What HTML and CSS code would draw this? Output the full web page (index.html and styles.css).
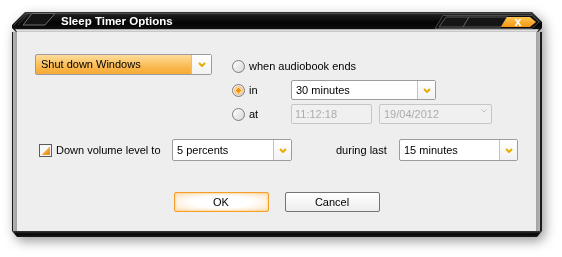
FILE: index.html
```html
<!DOCTYPE html>
<html>
<head>
<meta charset="utf-8">
<title>Sleep Timer Options</title>
<link rel="stylesheet" href="styles.css">
</head>
<body>
<div class="window">
  <div class="titlebar">
    <svg class="title-bg" width="530" height="20" viewBox="0 0 530 20">
      <defs>
        <linearGradient id="tbg" x1="0" y1="0" x2="0" y2="1">
          <stop offset="0" stop-color="#3a3a3a"/>
          <stop offset="0.18" stop-color="#1a1a1a"/>
          <stop offset="0.55" stop-color="#040404"/>
          <stop offset="1" stop-color="#161616"/>
        </linearGradient>
        <linearGradient id="cbg" x1="0" y1="0" x2="0" y2="1">
          <stop offset="0" stop-color="#ffc652"/>
          <stop offset="1" stop-color="#f39612"/>
        </linearGradient>
        <linearGradient id="strip" x1="0" y1="0" x2="0" y2="1">
          <stop offset="0" stop-color="#8a8a8a"/>
          <stop offset="0.4" stop-color="#e4e4e4"/>
          <stop offset="1" stop-color="#bdbdbd"/>
        </linearGradient>
      </defs>
      <polygon points="13,0 520,0 530,10 530,16 526,20 4,20 0,16 0,13" fill="url(#tbg)"/>
      <polyline points="1.5,13.5 14,1.5 519,1.5 528.5,11" fill="none" stroke="#4c4c4c" stroke-width="1"/>
      <polygon points="3,17 527,17 525,20 5,20" fill="url(#strip)"/>
      <polygon points="20,1.5 43,1.5 33,13 11,13" fill="#141414" stroke="#6e6e6e" stroke-width="1"/>
      <line x1="16" y1="1.5" x2="6" y2="13" stroke="#3c3c3c" stroke-width="1"/>
      <polygon points="431,3.5 520,3.5 527,10 520,16.5 423,16.5" fill="#0c0c0c" stroke="#4a4a4a" stroke-width="1"/>
      <polygon points="434,5 457,5 451,15 427,15" fill="#151515" stroke="#5a5a5a" stroke-width="1"/>
      <polygon points="457,5 495,5 489,15 451,15" fill="#151515" stroke="#5a5a5a" stroke-width="1"/>
      <polygon points="495,5 518,5 524,10 518,15 489,15" fill="url(#cbg)"/>
      <text x="506" y="14" text-anchor="middle" class="close-x">x</text>
    </svg>
    <div class="title-text">Sleep Timer Options</div>
  </div>

  <div class="frame">
    <div class="content">
      <div class="top-row">
        <div class="combo combo-accent combo-main">
          <span class="combo-text">Shut down Windows</span>
          <span class="combo-btn combo-btn-wide">
            <svg width="8" height="5" viewBox="0 0 8 5"><polyline points="1,1 4,4 7,1" fill="none" stroke="#e2ad00" stroke-width="2"/></svg>
          </span>
        </div>

        <div class="options">
          <div class="radio span2">
            <svg width="13" height="13" viewBox="0 0 13 13"><defs><linearGradient id="rg1" x1="0" y1="0" x2="1" y2="1"><stop offset="0" stop-color="#ffffff"/><stop offset="1" stop-color="#d6d6d6"/></linearGradient></defs><circle cx="6.5" cy="6.5" r="6" fill="url(#rg1)" stroke="#7c7c7c"/></svg>
            <span>when audiobook ends</span>
          </div>

          <div class="radio">
            <svg width="13" height="13" viewBox="0 0 13 13"><circle cx="6.5" cy="6.5" r="6" fill="url(#rg1)" stroke="#7c7c7c"/><circle cx="6.5" cy="6.5" r="4" fill="#fde3bd" stroke="#f4b15a" stroke-width="0.8"/><polygon points="6.5,3.6 9.4,6.5 6.5,9.4 3.6,6.5" fill="#f0940f"/></svg>
            <span>in</span>
          </div>
          <div class="combo combo-in">
            <span class="combo-text">30 minutes</span>
            <span class="combo-btn">
              <svg width="8" height="5" viewBox="0 0 8 5"><polyline points="1,1 4,4 7,1" fill="none" stroke="#e8ac00" stroke-width="2"/></svg>
            </span>
          </div>

          <div class="radio">
            <svg width="13" height="13" viewBox="0 0 13 13"><circle cx="6.5" cy="6.5" r="6" fill="url(#rg1)" stroke="#7c7c7c"/></svg>
            <span>at</span>
          </div>
          <div class="datetime">
            <div class="field field-time">11:12:18</div>
            <div class="field field-date">
              <span class="field-text">19/04/2012</span>
              <span class="field-btn">
                <svg width="6" height="4" viewBox="0 0 6 4"><polyline points="0.5,0.5 3,3 5.5,0.5" fill="none" stroke="#c4c4c4" stroke-width="1"/></svg>
              </span>
            </div>
          </div>
        </div>
      </div>

      <div class="volume-row">
        <svg class="checkbox" width="13" height="13" viewBox="0 0 13 13"><defs><linearGradient id="cb" x1="0" y1="0" x2="1" y2="1"><stop offset="0" stop-color="#fbc46c"/><stop offset="1" stop-color="#e98a0c"/></linearGradient></defs><rect x="0.5" y="0.5" width="12" height="12" fill="#f7f7f7" stroke="#5c5c5c"/><polygon points="11,2.5 11,11 2.5,11" fill="url(#cb)"/></svg>
        <span class="vol-label">Down volume level to</span>
        <div class="combo combo-percent">
          <span class="combo-text">5 percents</span>
          <span class="combo-btn">
            <svg width="8" height="5" viewBox="0 0 8 5"><polyline points="1,1 4,4 7,1" fill="none" stroke="#e8ac00" stroke-width="2"/></svg>
          </span>
        </div>
        <span class="during-label">during last</span>
        <div class="combo combo-during">
          <span class="combo-text">15 minutes</span>
          <span class="combo-btn">
            <svg width="8" height="5" viewBox="0 0 8 5"><polyline points="1,1 4,4 7,1" fill="none" stroke="#e8ac00" stroke-width="2"/></svg>
          </span>
        </div>
      </div>

      <div class="buttons">
        <button class="btn btn-ok">OK</button>
        <button class="btn btn-cancel">Cancel</button>
      </div>
    </div>
  </div>
  <div class="bottombar"></div>
</div>
</body>
</html>
```

FILE: styles.css
```css
html, body {
  margin: 0;
  padding: 0;
  background: #ffffff;
}

body {
  width: 562px;
  height: 257px;
  overflow: hidden;
  font-family: "Liberation Sans", Arial, sans-serif;
  font-size: 11px;
  color: #000;
}

.window {
  margin: 12px 0 0 12px;
  width: 530px;
  filter: drop-shadow(3px 4px 6px rgba(0, 0, 0, 0.4));
}

/* title bar: svg and text share one grid cell */
.titlebar {
  display: grid;
  height: 20px;
}

.titlebar > * {
  grid-area: 1 / 1;
}

.title-bg {
  display: block;
}

.close-x {
  font-family: "Liberation Sans", Arial, sans-serif;
  font-weight: bold;
  font-size: 12.5px;
  fill: #ffffff;
}

.title-text {
  align-self: start;
  margin-top: 2px;
  padding-left: 49px;
  line-height: 14px;
  font-size: 11.5px;
  font-weight: bold;
  color: #ffffff;
  white-space: nowrap;
}

/* window frame */
.frame {
  border-left: 1px solid #1c1c1c;
  border-right: 2px solid #1c1c1c;
  padding: 0 4px;
  background: linear-gradient(to right, #b4b4b4 0, #9e9e9e 5px, #9e9e9e calc(100% - 5px), #b4b4b4 100%);
}

.content {
  height: 199px;
  box-sizing: border-box;
  background: #eeeeee;
  padding: 22px 0 0 18px;
}

.bottombar {
  height: 6px;
  background: linear-gradient(#3a3a3a, #050505 50%, #1a1a1a);
  clip-path: polygon(0 0, 100% 0, calc(100% - 5px) 100%, 5px 100%);
}

/* top area */
.top-row {
  display: flex;
  align-items: flex-start;
}

.combo {
  display: flex;
  box-sizing: border-box;
  border: 1px solid #9c9c9c;
  border-radius: 2px;
  background: #ffffff;
  height: 20px;
}

.combo-text {
  flex: 1;
  padding-left: 4px;
  line-height: 18px;
  white-space: nowrap;
}

.combo-btn {
  width: 17px;
  border-left: 1px solid #c2c2c2;
  display: flex;
  align-items: center;
  justify-content: center;
  background: linear-gradient(#ffffff, #f2f2f2);
}

.combo-btn svg {
  display: block;
}

.combo-btn-wide {
  width: 19px;
}

.combo-accent {
  background: linear-gradient(#fedd9a, #f9b548 70%, #f7ab38);
}

.combo-main {
  width: 177px;
  height: 21px;
  margin-right: 20px;
}

.combo-main .combo-text {
  padding-left: 5px;
  line-height: 19px;
}

.options {
  margin-top: 2px;
  display: grid;
  grid-template-columns: 59px auto;
  grid-auto-rows: 20px;
  row-gap: 4px;
}

.span2 {
  grid-column: 1 / span 2;
}

.radio {
  display: flex;
  align-items: center;
  gap: 4px;
  white-space: nowrap;
}

.radio svg {
  display: block;
  flex: none;
}

.combo-in {
  width: 145px;
}

.datetime {
  display: flex;
  gap: 7px;
}

.field {
  box-sizing: border-box;
  height: 20px;
  border: 1px solid #c6c6c6;
  border-radius: 2px;
  background: #f0f0f0;
  color: #acacac;
  line-height: 18px;
}

.field-time {
  width: 81px;
  padding-left: 3px;
}

.field-date {
  width: 113px;
  display: flex;
}

.field-text {
  flex: 1;
  padding-left: 4px;
}

.field-btn {
  width: 15px;
  display: flex;
  justify-content: center;
  padding-top: 4px;
}

.field-btn svg {
  display: block;
}

/* volume row */
.volume-row {
  margin-top: 15px;
  margin-left: 4px;
  display: flex;
  align-items: center;
  height: 22px;
}

.checkbox {
  display: block;
  flex: none;
}

.vol-label {
  margin-left: 4px;
  width: 116px;
  white-space: nowrap;
}

.combo-percent {
  width: 120px;
  height: 22px;
}

.combo-percent .combo-text,
.combo-during .combo-text {
  line-height: 20px;
}

.during-label {
  margin-left: 44px;
  width: 63px;
  white-space: nowrap;
}

.combo-during {
  width: 119px;
  height: 22px;
}

/* buttons */
.buttons {
  margin-top: 31px;
  margin-left: -18px;
  display: flex;
  justify-content: center;
  gap: 16px;
}

.btn {
  width: 95px;
  height: 20px;
  box-sizing: border-box;
  padding: 0;
  font-family: "Liberation Sans", Arial, sans-serif;
  font-size: 11px;
  color: #000;
  border-radius: 2px;
  line-height: 18px;
}

.btn-ok {
  border: 1px solid #f3a028;
  background: radial-gradient(ellipse at center, #ffffff 45%, #fde4bf 100%);
  box-shadow: inset 0 0 3px #fbc27a;
}

.btn-cancel {
  border: 1px solid #747474;
  background: linear-gradient(#ffffff, #ededed);
}
```
